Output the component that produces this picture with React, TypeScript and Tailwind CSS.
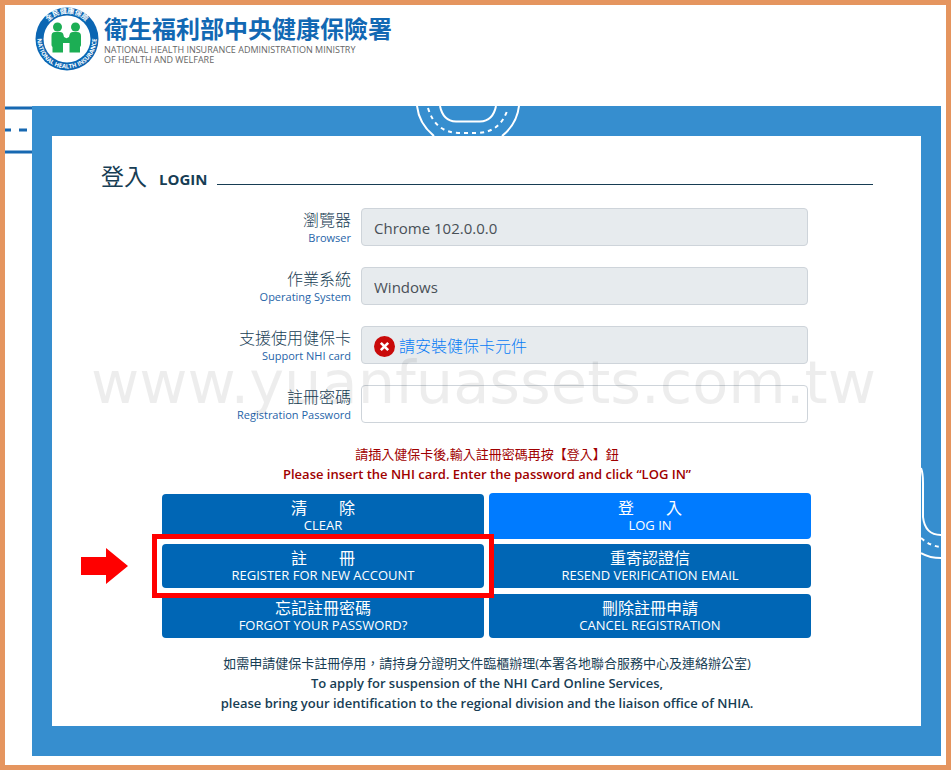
import type { ReactNode } from "react";

const ACTIONS = [
  { zh: "清　　除", en: "CLEAR" },
  { zh: "登　　入", en: "LOG IN", primary: true },
  { zh: "註　　冊", en: "REGISTER FOR NEW ACCOUNT", highlighted: true },
  { zh: "重寄認證信", en: "RESEND VERIFICATION EMAIL" },
  { zh: "忘記註冊密碼", en: "FORGOT YOUR PASSWORD?" },
  { zh: "刪除註冊申請", en: "CANCEL REGISTRATION" },
];

const FIELD = "h-[38px] w-full rounded border border-[#ced4da] px-3 pt-[2px] text-[15px] text-[#495057]";

function Logo() {
  return (
    <svg className="size-16 shrink-0" viewBox="0 0 64 64" aria-hidden="true">
      <defs>
        <path id="ring-top" d="M6.500 32a25.500 25.500 0 0 1 51 0" />
        <path id="ring-bottom" d="M3 26a29.600 29.600 0 1 0 58 0" />
      </defs>
      <circle cx="32" cy="32" r="31.500" fill="#0b66b3" />
      <circle cx="32" cy="32" r="23.500" fill="#fff" />
      <text fill="#fff" fontSize="7" fontWeight="700" fontFamily="Noto Sans CJK TC, sans-serif" textAnchor="middle">
        <textPath href="#ring-top" startOffset="50%">全民健康保險</textPath>
      </text>
      <text fill="#fff" fontSize="6" fontWeight="700" fontFamily="Open Sans, sans-serif" textAnchor="middle">
        <textPath href="#ring-bottom" startOffset="50%">NATIONAL HEALTH INSURANCE</textPath>
      </text>
      <g fill="#1cae54">
        <circle cx="22.500" cy="20" r="4.500" />
        <circle cx="40.500" cy="20" r="4.500" />
        <path d="M20 25h5q3 0 3.500 3l.5 2 2.500 1.200L34 30l.5-2q.500-3 3.500-3h4q4 0 4 4v9q0 1-1 2v5.500H34.500V36H28v9.500H17.500V40q-1-1-1-2v-9q0-4 3.500-4z" />
      </g>
    </svg>
  );
}

function RoadTop() {
  return (
    <svg className="absolute -top-[30px] left-[364px] h-[30px] w-[104px]" viewBox="0 0 104 30" fill="none" stroke="#fff" aria-hidden="true">
      <path d="M1 0Q3 18 18 30M103 0Q101 18 86 30" strokeWidth="2" />
      <path d="M24 0Q27 15 40 15.500h24Q77 15 80 0" strokeWidth="2" />
      <path d="M12 2Q19 26 42 27h20Q85 26 92 2" strokeWidth="2" strokeDasharray="4 4" />
    </svg>
  );
}

function RoadRight() {
  return (
    <svg className="absolute top-[330px] -right-5 h-[96px] w-5" viewBox="0 0 20 96" fill="none" stroke="#fff" aria-hidden="true">
      <path d="M0 2Q2 7 2 17v34Q4 69 20 69M0 87q9 5 20 5" strokeWidth="2" />
      <path d="M0 72q9 8 20 9" strokeWidth="2" strokeDasharray="4 4" />
    </svg>
  );
}

function Row({ id, zh, en, children }: { id: string; zh: string; en: string; children: ReactNode }) {
  return (
    <div className="grid grid-cols-[250px_1fr] items-center gap-[10px]">
      <label htmlFor={id} className="pt-[2px] text-right">
        <span className="block text-base leading-5 font-light text-[#173d54]">{zh}</span>
        <span className="block text-[11px] leading-4 text-[#1f64a8]">{en}</span>
      </label>
      {children}
    </div>
  );
}

function ActionButton({ zh, en, primary }: { zh: string; en: string; primary?: boolean }) {
  return (
    <button
      type="button"
      className={`block w-full rounded text-white ${primary ? "-my-px h-[46px] bg-[#007bff]" : "h-11 bg-[#0066b5]"}`}
    >
      <span className="block text-base leading-[18px]">{zh}</span>
      <span className="block text-[13px] leading-4">{en}</span>
    </button>
  );
}

export default function App() {
  return (
    <div className="relative flex min-h-screen flex-col border-5 border-[#e5955f] bg-white font-['Open_Sans','Noto_Sans_CJK_TC',sans-serif]">
      <header className="flex h-[101px] items-start gap-[5px] pt-[2px] pl-[30px]">
        <Logo />
        <div className="pt-[6px]">
          <p className="text-2xl leading-8 font-bold text-[#1268b3]">衛生福利部中央健康保險署</p>
          <p className="text-[9px] leading-[10px] text-[#666]">
            NATIONAL HEALTH INSURANCE ADMINISTRATION MINISTRY
            <br />
            OF HEALTH AND WELFARE
          </p>
        </div>
      </header>

      <div className="flex grow pr-[5px] pb-[9px]">
        <svg className="h-12 w-[27px] shrink-0" viewBox="0 0 27 48" stroke="#1768b1" strokeWidth="3" aria-hidden="true">
          <path d="M0 2h27M0 46h27" />
          <path d="M0 24h6M14 24h8" />
        </svg>

        <main className="relative grow border-x-20 border-y-30 border-[#368ecf] pt-6 pr-12 pb-3 pl-[49px]">
          <RoadTop />
          <RoadRight />

          <h1 className="flex items-baseline text-[#173d54]">
            <span className="text-[23px] leading-8">登入</span>
            <span className="ml-3 text-[15px] font-bold">LOGIN</span>
            <span className="ml-[10px] h-px grow bg-[#173d54]" />
          </h1>

          <form>
            <div className="mt-4 space-y-[21px] pr-[65px]">
              <Row id="browser" zh="瀏覽器" en="Browser">
                <input id="browser" className={`${FIELD} bg-[#e7ebee]`} readOnly value="Chrome 102.0.0.0" />
              </Row>
              <Row id="os" zh="作業系統" en="Operating System">
                <input id="os" className={`${FIELD} bg-[#e7ebee]`} readOnly value="Windows" />
              </Row>
              <Row id="nhi-card" zh="支援使用健保卡" en="Support NHI card">
                <output id="nhi-card" className={`${FIELD} flex items-center gap-1 bg-[#e7ebee]`}>
                  <svg className="size-[21px]" viewBox="0 0 20 20" aria-hidden="true">
                    <circle cx="10" cy="10" r="10" fill="#c90a0a" />
                    <path d="m6.500 6.500 7 7m0-7-7 7" stroke="#fff" strokeWidth="2.500" />
                  </svg>
                  <a href="#install" className="text-base font-light text-[#087cf5]">請安裝健保卡元件</a>
                </output>
              </Row>
              <Row id="password" zh="註冊密碼" en="Registration Password">
                <input id="password" type="password" className={`${FIELD} bg-white`} />
              </Row>
            </div>

            <div className="mt-[21px] text-center text-[13px] leading-5 text-[#a00000]">
              <p>請插入健保卡後,輸入註冊密碼再按【登入】鈕</p>
              <p className="font-semibold">Please insert the NHI card. Enter the password and click “LOG IN”</p>
            </div>

            <div className="mt-[10px] mr-[62px] ml-[61px] grid grid-cols-2 gap-x-[5px] gap-y-[6px]">
              {ACTIONS.map(({ highlighted, ...action }) =>
                highlighted ? (
                  <div key={action.en} className="relative">
                    <ActionButton {...action} />
                    <div className="pointer-events-none absolute -inset-[10px] z-10 border-5 border-[#f00]" />
                    <svg className="absolute top-1 right-full mr-[34px] h-9 w-[47px]" viewBox="0 0 47 36" fill="#f00" aria-hidden="true">
                      <path d="M0 9h25V0l22 18-22 18v-9H0z" />
                    </svg>
                  </div>
                ) : (
                  <ActionButton key={action.en} {...action} />
                ),
              )}
            </div>
          </form>

          <div className="mt-[15px] text-center text-[13px] leading-5 text-[#173d54]">
            <p>如需申請健保卡註冊停用，請持身分證明文件臨櫃辦理(本署各地聯合服務中心及連絡辦公室)</p>
            <p className="font-semibold">
              To apply for suspension of the NHI Card Online Services,
              <br />
              please bring your identification to the regional division and the liaison office of NHIA.
            </p>
          </div>
        </main>
      </div>

      <p className="pointer-events-none absolute inset-x-0 top-[346px] pl-4 text-center font-['DejaVu_Sans',sans-serif] text-[59px] leading-[64px] text-black/7">
        www.yuanfuassets.com.tw
      </p>
    </div>
  );
}
